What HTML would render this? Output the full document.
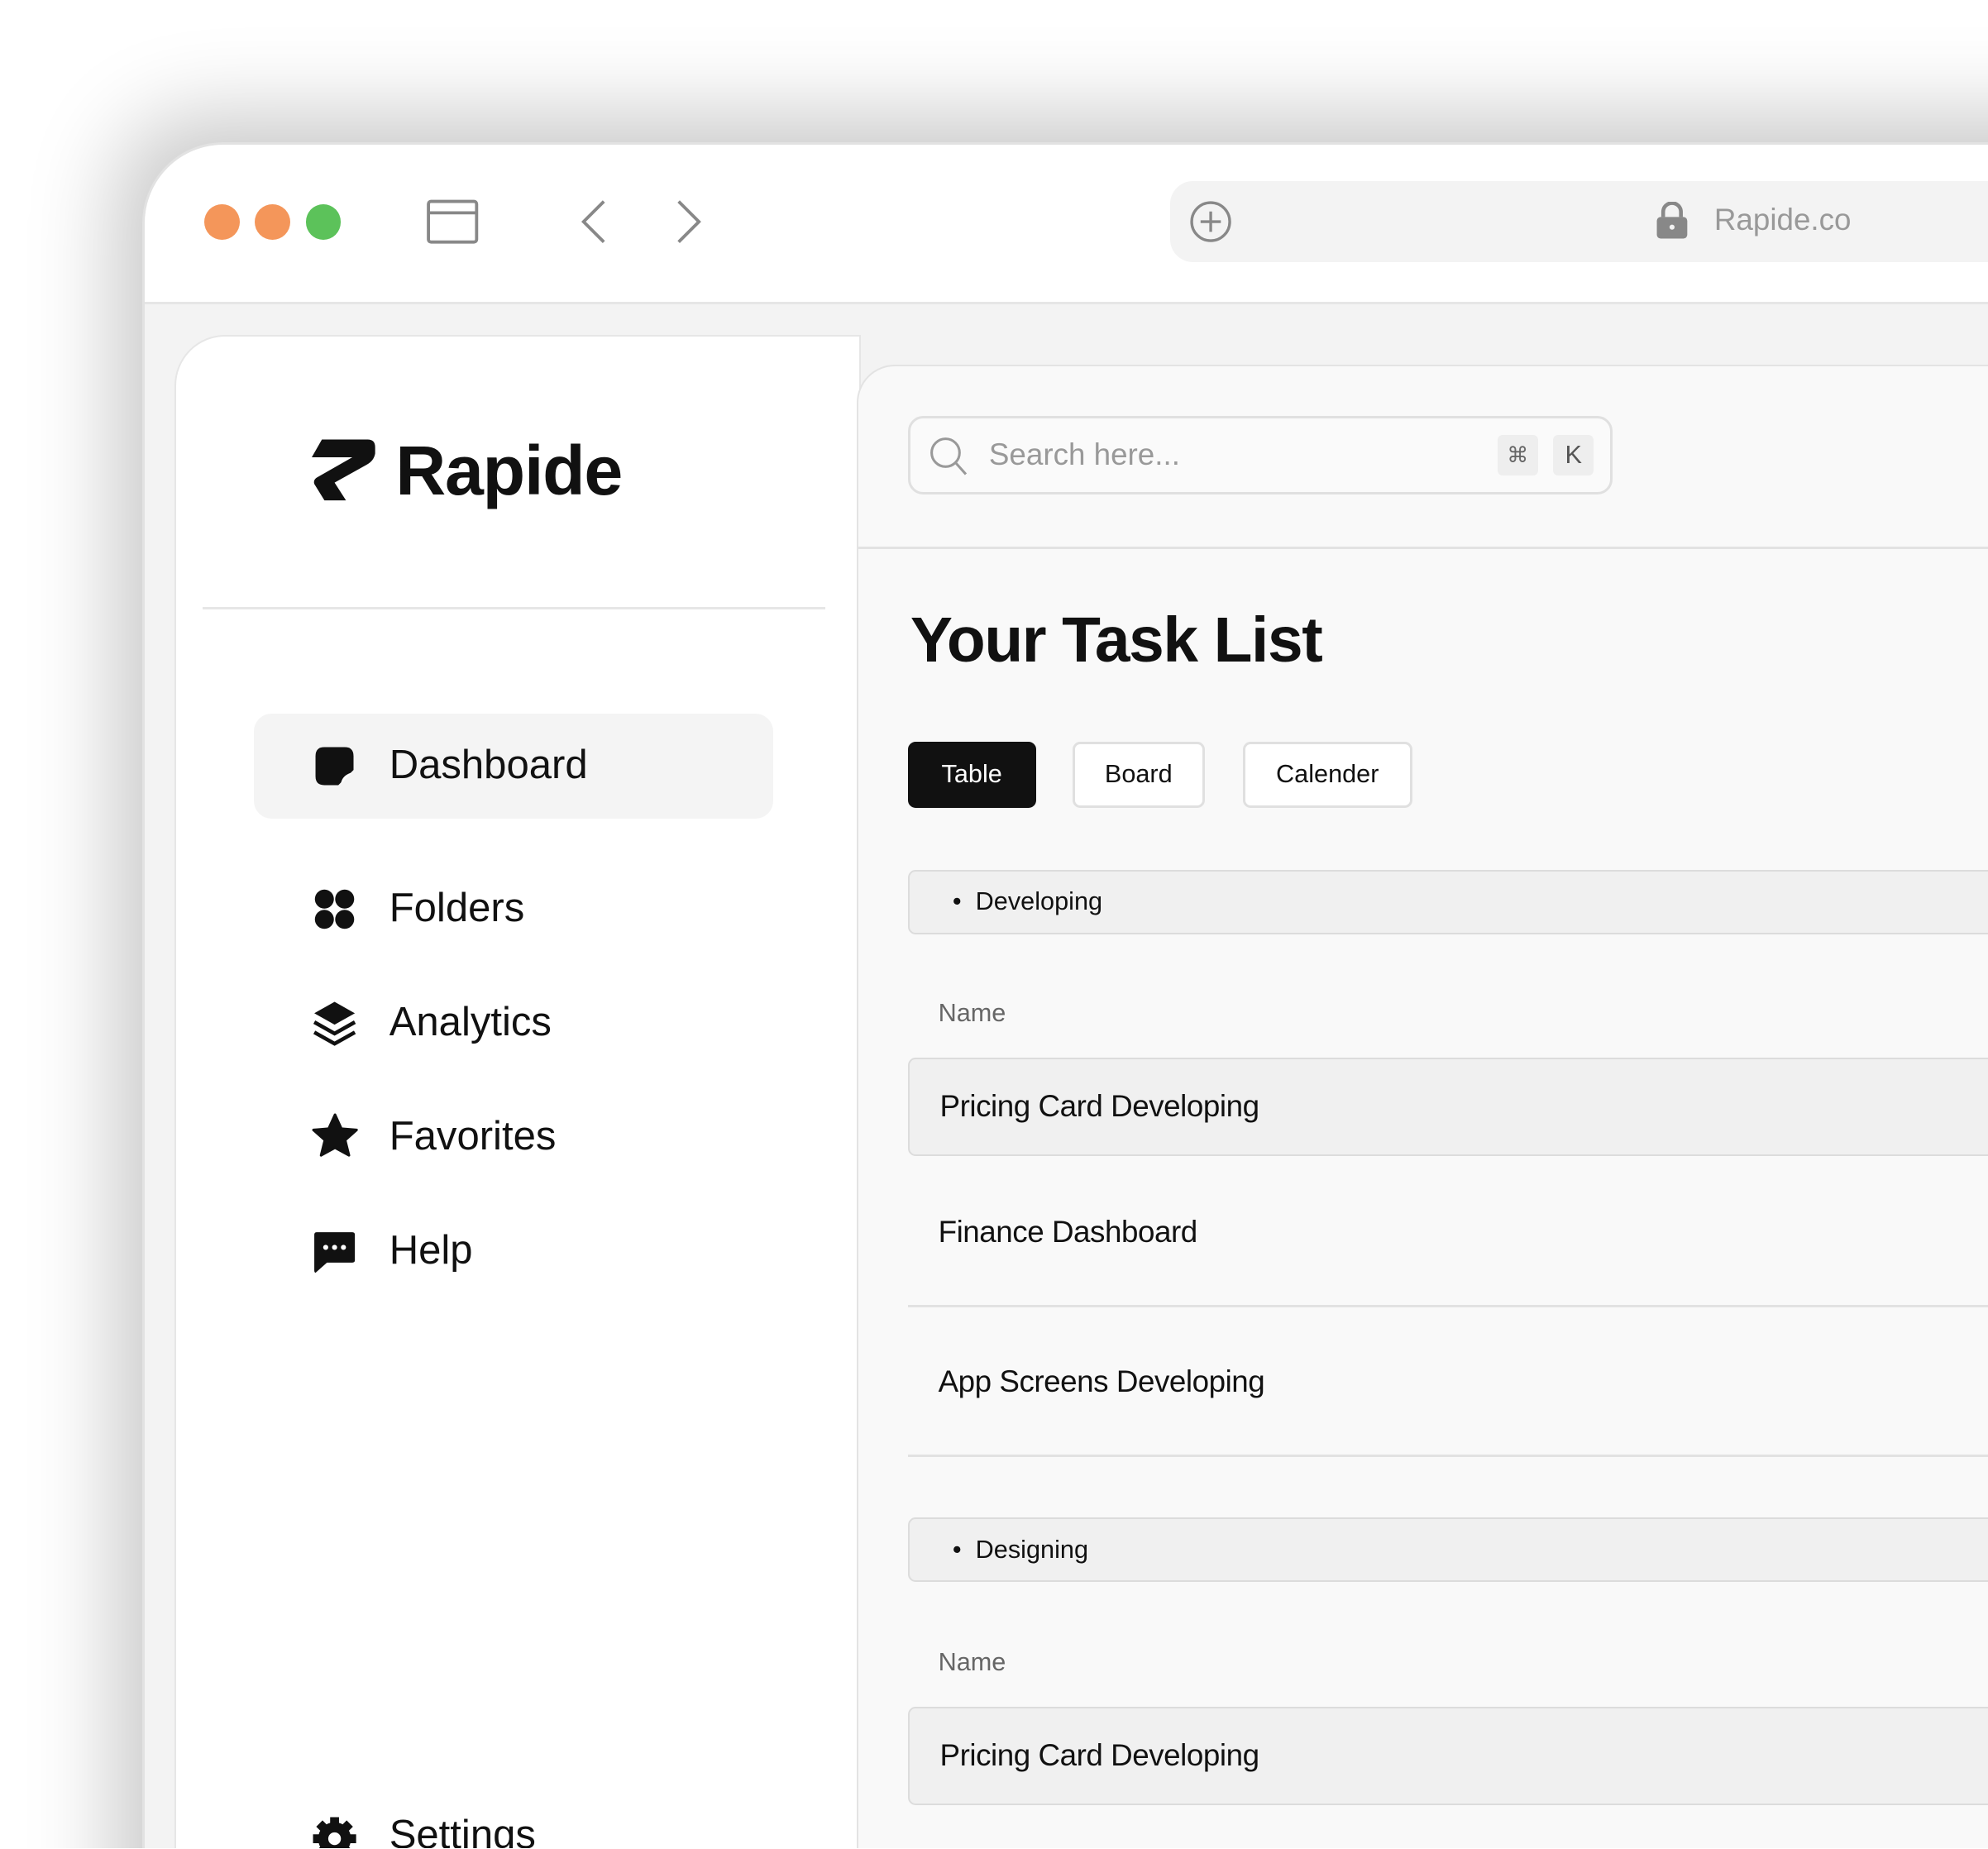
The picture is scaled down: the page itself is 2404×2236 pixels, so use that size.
<!DOCTYPE html>
<html><head><meta charset="utf-8"><style>
html{zoom:1.5332;overflow:hidden}
*{margin:0;padding:0;box-sizing:border-box}
body{width:1568px;height:1458px;overflow:hidden;background:#fff;font-family:"Liberation Sans",sans-serif;color:#111}
#w{position:relative;width:1568px;height:1458px;overflow:hidden;background:#fff}
.abs{position:absolute}
.win{left:112px;top:112px;width:1600px;height:1500px;border-radius:64px 0 0 0;background:#f3f3f3;border:2px solid #e2e2e2;box-shadow:-20px -20px 70px rgba(0,0,0,.22);overflow:hidden}
.bar{left:0;top:0;width:100%;height:126px;background:#fff;border-bottom:2px solid #e6e6e6}
.dot{width:28px;height:28px;border-radius:50%}
.side{left:24px;top:150px;width:541px;height:1400px;background:#fff;border:1.5px solid #e6e6e6;border-radius:40px 0 0 0}
.main{left:562px;top:174px;width:1100px;height:1400px;background:#f9f9f9;border:1.5px solid #e3e3e3;border-radius:30px 0 0 0}
.nav{font-size:32px;color:#111}
.btn{top:585px;height:52px;border-radius:6px;font-size:20px;display:flex;align-items:center;justify-content:center}
.grp{left:716px;width:900px;height:51px;background:#f0f0f0;border:1.5px solid #dcdcdc;border-radius:6px;font-size:20px;padding-left:34px;display:flex;align-items:center}
.row{left:716px;width:900px;height:78px;background:#f0f0f0;border:1.5px solid #dcdcdc;border-radius:6px;font-size:24px;padding-left:24px;display:flex;align-items:center;letter-spacing:-0.3px}
.t{font-size:24px;letter-spacing:-0.3px}
.lbl{font-size:20px;color:#666}
.ln{left:716px;width:900px;height:2px;background:#e2e2e2}
</style></head><body><div id="w">
<div class="abs win">
 <div class="abs bar"></div>
 <div class="abs side"></div>
 <div class="abs main"></div>
</div>
<div class="abs dot" style="left:161px;top:161px;background:#f4965a"></div>
<div class="abs dot" style="left:201px;top:161px;background:#f4965a"></div>
<div class="abs dot" style="left:241px;top:161px;background:#5cc25a"></div>
<svg class="abs" style="left:336px;top:156px" width="42" height="38" viewBox="0 0 42 38"><rect x="2" y="3" width="38" height="32" rx="2" fill="none" stroke="#888" stroke-width="2.5"/><line x1="2" y1="12" x2="40" y2="12" stroke="#888" stroke-width="2.5"/></svg>
<svg class="abs" style="left:455px;top:156px" width="110" height="38" viewBox="0 0 110 38"><path d="M21 3L5 19l16 16" fill="none" stroke="#888" stroke-width="2.5"/><path d="M80 3l16 16-16 16" fill="none" stroke="#888" stroke-width="2.5"/></svg>
<div class="abs" style="left:923px;top:143px;width:700px;height:64px;background:#f3f3f3;border-radius:18px"></div>
<svg class="abs" style="left:938px;top:158px" width="34" height="34" viewBox="0 0 34 34"><circle cx="17" cy="17" r="15" fill="none" stroke="#888" stroke-width="2.2"/><path d="M17 9v16M9 17h16" stroke="#888" stroke-width="2.2"/></svg>
<svg class="abs" style="left:1306px;top:159px" width="26" height="30" viewBox="0 0 26 30"><path d="M6 12V8a7 7 0 0 1 14 0v4" fill="none" stroke="#888" stroke-width="3"/><rect x="1" y="12" width="24" height="17" rx="3" fill="#888"/><circle cx="13" cy="20" r="2" fill="#f3f3f3"/></svg>
<div class="abs" style="left:1352px;top:160px;font-size:24px;color:#999">Rapide.co</div>

<svg class="abs" style="left:246px;top:346px" width="52" height="52" viewBox="0 0 52 52"><path d="M8 1H44Q50 1 50 7V12Q49 18 43 21L18 35L27 49H10L2 36Q1 33 4 31L32 15H0Z" fill="#111"/></svg>
<div class="abs" style="left:312px;top:340px;font-size:55px;font-weight:bold;letter-spacing:-0.8px">Rapide</div>
<div class="abs" style="left:160px;top:479px;width:491px;height:2px;background:#e6e6e6"></div>

<div class="abs" style="left:200px;top:563px;width:410px;height:83px;background:#f4f4f4;border-radius:14px"></div>
<svg class="abs" style="left:248px;top:588px" width="32" height="32" viewBox="0 0 32 32"><path d="M8 1H24Q31 1 31 8V19L19 31H8Q1 31 1 24V8Q1 1 8 1Z" fill="#111"/><path d="M30 21L21 30Q22 23 30 21Z" fill="#fff"/></svg>
<div class="abs nav" style="left:307px;top:585px">Dashboard</div>
<svg class="abs" style="left:248px;top:701px" width="32" height="32" viewBox="0 0 32 32"><circle cx="8" cy="8" r="7.5" fill="#111"/><circle cx="24" cy="8" r="7.5" fill="#111"/><circle cx="8" cy="24" r="7.5" fill="#111"/><circle cx="24" cy="24" r="7.5" fill="#111"/></svg>
<div class="abs nav" style="left:307px;top:698px">Folders</div>
<svg class="abs" style="left:246px;top:789px" width="36" height="36" viewBox="0 0 36 36"><path d="M18 1L34 10L18 19L2 10Z" fill="#111"/><path d="M2 17L18 26L34 17M2 25L18 34L34 25" fill="none" stroke="#111" stroke-width="3"/></svg>
<div class="abs nav" style="left:307px;top:788px">Analytics</div>
<svg class="abs" style="left:245px;top:877px" width="38" height="38" viewBox="0 0 38 38"><path d="M19 2l5 11 12 1-9 8 3 12-11-6-11 6 3-12-9-8 12-1z" fill="#111" stroke="#111" stroke-width="2" stroke-linejoin="round"/></svg>
<div class="abs nav" style="left:307px;top:878px">Favorites</div>
<svg class="abs" style="left:246px;top:970px" width="36" height="36" viewBox="0 0 36 36"><path d="M4 2H32Q34 2 34 4V24Q34 26 32 26H12L3 34Q2 34 2 32V4Q2 2 4 2Z" fill="#111"/><circle cx="11" cy="14" r="2" fill="#fff"/><circle cx="18" cy="14" r="2" fill="#fff"/><circle cx="25" cy="14" r="2" fill="#fff"/></svg>
<div class="abs nav" style="left:307px;top:968px">Help</div>
<svg class="abs" style="left:246px;top:1432px" width="36" height="36" viewBox="0 0 36 36"><circle cx="18" cy="18" r="13" fill="#111"/><g stroke="#111" stroke-width="7"><path d="M18 1v34M1 18h34M6 6l24 24M30 6L6 30"/></g><circle cx="18" cy="18" r="5" fill="#fff"/></svg>
<div class="abs nav" style="left:307px;top:1429px">Settings</div>

<div class="abs" style="left:716px;top:328px;width:556px;height:62px;border:2px solid #e0e0e0;border-radius:12px;background:#fafafa"></div>
<svg class="abs" style="left:732px;top:343px" width="32" height="34" viewBox="0 0 32 34"><circle cx="14" cy="14" r="11" fill="none" stroke="#999" stroke-width="2"/><path d="M22 22l8 9" stroke="#999" stroke-width="2"/></svg>
<div class="abs" style="left:780px;top:345px;font-size:24px;color:#999">Search here...</div>
<div class="abs" style="left:1181px;top:343px;width:32px;height:32px;background:#eee;border-radius:4px;font-size:17px;color:#666;text-align:center;line-height:32px">⌘</div>
<div class="abs" style="left:1225px;top:343px;width:32px;height:32px;background:#eee;border-radius:4px;font-size:20px;color:#555;text-align:center;line-height:32px">K</div>
<div class="abs" style="left:677px;top:431px;width:900px;height:2px;background:#e2e2e2"></div>

<div class="abs" style="left:718px;top:477px;font-size:50px;font-weight:bold;letter-spacing:-0.9px">Your Task List</div>
<div class="abs btn" style="left:716px;width:101px;background:#111;color:#fff">Table</div>
<div class="abs btn" style="left:846px;width:104px;border:2px solid #e0e0e0;background:#fff">Board</div>
<div class="abs btn" style="left:980px;width:134px;border:2px solid #e0e0e0;background:#fff">Calender</div>

<div class="abs grp" style="top:686px">•&nbsp; Developing</div>
<div class="abs lbl" style="left:740px;top:788px">Name</div>
<div class="abs row" style="top:834px">Pricing Card Developing</div>
<div class="abs t" style="left:740px;top:958px">Finance Dashboard</div>
<div class="abs ln" style="top:1029px"></div>
<div class="abs t" style="left:740px;top:1076px">App Screens Developing</div>
<div class="abs ln" style="top:1147px"></div>
<div class="abs grp" style="top:1197px">•&nbsp; Designing</div>
<div class="abs lbl" style="left:740px;top:1300px">Name</div>
<div class="abs row" style="top:1346px">Pricing Card Developing</div>
</div></body></html>
